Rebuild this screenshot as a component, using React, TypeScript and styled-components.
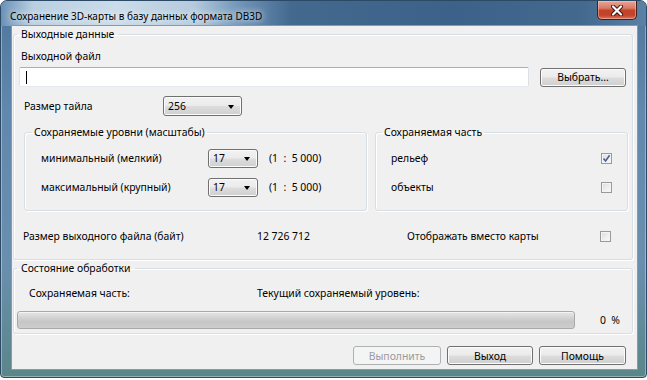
import React from "react";
import styled, { createGlobalStyle } from "styled-components";

const GlobalStyle = createGlobalStyle`
  html, body { margin: 0; padding: 0; background: #ffffff; }
  body { font-family: "Noto Sans", "Open Sans", sans-serif; font-size: 10.4px; color: #000; }
  * { box-sizing: border-box; }
`;

const Window = styled.div`
  width: 647px;
  height: 378px;
  display: flex;
  flex-direction: column;
  padding: 0 9px 8px 11px;
  border: 1px solid #2c4a66;
  border-radius: 7px 7px 4px 4px;
  background: linear-gradient(180deg, #4f769c 0%, #6188ad 30%, #6a8fae 70%, #5a8689 100%);
  box-shadow: inset 0 0 0 1px rgba(255, 255, 255, 0.35);
`;

const TitleBar = styled.div`
  height: 25px;
  display: flex;
  align-items: flex-start;
  margin: 0 -9px 0 -11px;
  padding: 0 9px 0 9px;
  border-radius: 6px 6px 0 0;
  background: linear-gradient(90deg, #6a91b6 0%, #b9cfe2 5%, #cbdcea 18%, #b4cadd 30%, #6f95b8 37%, #44698f 45%, #3c6289 70%, #43698f 90%, #5a81a6 100%);
`;

const TitleText = styled.div`
  margin-top: 8px;
  font-size: 10px;
  line-height: 14px;
  color: #000;
  text-shadow: 0 0 6px rgba(255, 255, 255, 0.9), 0 0 10px rgba(255, 255, 255, 0.7);
`;

const CloseButton = styled.div`
  margin-left: auto;
  width: 40px;
  height: 19px;
  display: flex;
  align-items: center;
  justify-content: center;
  border: 1px solid #4a1e18;
  border-top: none;
  border-radius: 0 0 5px 5px;
  background: linear-gradient(180deg, #e8a595 0%, #d77b66 40%, #c24328 52%, #c0432b 78%, #dc7359 100%);
  box-shadow: inset 0 0 0 1px rgba(255, 210, 200, 0.45);
`;

const Client = styled.div`
  flex: 1;
  display: flex;
  flex-direction: column;
  padding: 1px 4px 0 1px;
  background: #f0f0f0;
  box-shadow: 0 0 0 1px #7f9bb7;
`;

const GroupBox = styled.fieldset<{ $pad: string }>`
  margin: 0;
  min-width: 0;
  padding: ${(p) => p.$pad};
  border: 1px solid #d5dfe5;
  border-radius: 3px;
  box-shadow: inset 1px 1px 0 #ffffff, 1px 1px 0 #ffffff;
`;

const Legend = styled.legend<{ $px: number }>`
  padding: 0 ${(p) => p.$px}px;
  line-height: 14px;
  font-size: 10.4px;
`;

const Label = styled.div<{ $pl?: number; $w?: number }>`
  line-height: 14px;
  padding-left: ${(p) => p.$pl ?? 0}px;
  width: ${(p) => (p.$w ? `${p.$w}px` : "auto")};
  flex-shrink: 0;
  white-space: pre;
`;

const Row = styled.div<{ $mt: number; $pl?: number; $h?: number }>`
  display: flex;
  align-items: center;
  margin-top: ${(p) => p.$mt}px;
  padding-left: ${(p) => p.$pl ?? 0}px;
  height: ${(p) => (p.$h ? `${p.$h}px` : "auto")};
`;

const TextField = styled.div`
  width: 510px;
  height: 20px;
  margin-left: 2px;
  display: flex;
  align-items: center;
  padding-left: 6px;
  background: #ffffff;
  border: 1px solid;
  border-color: #abadb3 #dbdfe6 #e3e9ef #e2e3ea;
  border-radius: 2px;
`;

const Caret = styled.span`
  width: 1px;
  height: 13px;
  background: #000;
`;

const Button = styled.div<{ $w: number; $disabled?: boolean; $ml?: number }>`
  width: ${(p) => p.$w}px;
  height: 19px;
  margin-left: ${(p) => p.$ml ?? 0}px;
  display: flex;
  align-items: center;
  justify-content: center;
  flex-shrink: 0;
  border: 1px solid ${(p) => (p.$disabled ? "#adb2b5" : "#707070")};
  border-radius: 3px;
  color: ${(p) => (p.$disabled ? "#9a9a9a" : "#000")};
  background: ${(p) =>
    p.$disabled
      ? "#f4f4f4"
      : "linear-gradient(180deg, #f2f2f2 0%, #ebebeb 48%, #dddddd 52%, #cfcfcf 100%)"};
  box-shadow: inset 0 0 0 1px ${(p) => (p.$disabled ? "#f4f4f4" : "#fcfcfc")};
  line-height: 14px;
`;

const Combo = styled.div<{ $w: number; $h: number }>`
  width: ${(p) => p.$w}px;
  height: ${(p) => p.$h}px;
  flex-shrink: 0;
  display: flex;
  align-items: center;
  padding: 0 7px 0 4px;
  border: 1px solid #707070;
  border-radius: 3px;
  background: linear-gradient(180deg, #f2f2f2 0%, #ebebeb 48%, #dddddd 52%, #cfcfcf 100%);
  box-shadow: inset 0 0 0 1px #fcfcfc;
  line-height: 14px;
`;

const ComboValue = styled.span`
  flex: 1;
`;

const Arrow = styled.span`
  width: 0;
  height: 0;
  border-left: 3.5px solid transparent;
  border-right: 3.5px solid transparent;
  border-top: 4px solid #000;
  margin-top: 1px;
`;

const GroupsRow = styled.div`
  display: flex;
  gap: 8px;
  margin-top: 9px;
  padding-left: 7px;
`;

const LevelRow = styled.div<{ $mt: number }>`
  display: grid;
  grid-template-columns: 167px 50px auto;
  align-items: center;
  height: 20px;
  margin-top: ${(p) => p.$mt}px;
  padding-left: 9px;
`;

const PartRow = styled.div<{ $mt: number }>`
  display: flex;
  align-items: center;
  height: 20px;
  margin-top: ${(p) => p.$mt}px;
  padding-left: 9px;
  padding-right: 15px;
`;

const Spacer = styled.div`
  flex: 1;
`;

const CheckBox = styled.div<{ $mr?: number }>`
  width: 11px;
  height: 11px;
  flex-shrink: 0;
  margin-right: ${(p) => p.$mr ?? 0}px;
  display: flex;
  align-items: center;
  justify-content: center;
  border: 1px solid #9a9a9a;
  background: linear-gradient(135deg, #dcdcdc 0%, #f0f0f0 60%, #fafafa 100%);
  box-shadow: inset 0 0 0 1px #f4f4f4;
`;

const ProgressRow = styled.div`
  display: flex;
  align-items: center;
  margin-top: 11px;
  padding-right: 12px;
`;

const ProgressBar = styled.div`
  width: 558px;
  height: 18px;
  border: 1px solid #a9a9a9;
  border-radius: 3px;
  background: linear-gradient(180deg, #e6e6e6 0%, #d4d4d4 35%, #c6c6c6 60%, #cdcdcd 100%);
  box-shadow: inset 0 1px 0 #f4f4f4;
`;

const Percent = styled.div`
  margin-left: auto;
  line-height: 14px;
  white-space: pre;
`;

const ButtonRow = styled.div`
  display: flex;
  justify-content: flex-end;
  gap: 6px;
  margin-top: 12px;
  padding-right: 7px;
`;

const CloseGlyph = () => (
  <svg width="14" height="11" viewBox="0 0 14 11">
    <path d="M3 1.5 L11 9.5 M11 1.5 L3 9.5" stroke="#3a1410" strokeWidth="4" strokeLinecap="round" />
    <path d="M3 1.5 L11 9.5 M11 1.5 L3 9.5" stroke="#ffffff" strokeWidth="2.2" strokeLinecap="round" />
  </svg>
);

const CheckMark = () => (
  <svg width="9" height="9" viewBox="0 0 9 9">
    <path d="M1.5 4.5 L3.6 7 L7.6 1.2" stroke="#4a5f97" strokeWidth="1.6" fill="none" />
  </svg>
);

export default function App() {
  return (
    <>
      <GlobalStyle />
      <Window>
        <TitleBar>
          <TitleText>Сохранение 3D-карты в базу данных формата DB3D</TitleText>
          <CloseButton>
            <CloseGlyph />
          </CloseButton>
        </TitleBar>
        <Client>
          <GroupBox $pad="8px 0 16px 3px">
            <Legend $px={4}>Выходные данные</Legend>
            <Label $pl={4}>Выходной файл</Label>
            <Row $mt={4}>
              <TextField>
                <Caret />
              </TextField>
              <Button $w={86} $ml={11}>Выбрать...</Button>
            </Row>
            <Row $mt={9}>
              <Label $pl={7} $w={146}>Размер тайла</Label>
              <Combo $w={79} $h={20}>
                <ComboValue>256</ComboValue>
                <Arrow />
              </Combo>
            </Row>
            <GroupsRow>
              <GroupBox $pad="9px 0 13px 7px" style={{ width: 343 }}>
                <Legend $px={2}>Сохраняемые уровни (масштабы)</Legend>
                <LevelRow $mt={0}>
                  <Label>минимальный (мелкий)</Label>
                  <Combo $w={50} $h={19}>
                    <ComboValue>17</ComboValue>
                    <Arrow />
                  </Combo>
                  <Label $pl={11}>{"(1  :  5 000)"}</Label>
                </LevelRow>
                <LevelRow $mt={9}>
                  <Label>максимальный (крупный)</Label>
                  <Combo $w={50} $h={19}>
                    <ComboValue>17</ComboValue>
                    <Arrow />
                  </Combo>
                  <Label $pl={11}>{"(1  :  5 000)"}</Label>
                </LevelRow>
              </GroupBox>
              <GroupBox $pad="9px 0 13px 6px" style={{ width: 253 }}>
                <Legend $px={2}>Сохраняемая часть</Legend>
                <PartRow $mt={0}>
                  <Label>рельеф</Label>
                  <Spacer />
                  <CheckBox>
                    <CheckMark />
                  </CheckBox>
                </PartRow>
                <PartRow $mt={9}>
                  <Label>объекты</Label>
                  <Spacer />
                  <CheckBox />
                </PartRow>
              </GroupBox>
            </GroupsRow>
            <Row $mt={18} $pl={6} $h={14}>
              <Label $w={234}>Размер выходного файла (байт)</Label>
              <Label $w={150}>12 726 712</Label>
              <Label>Отображать вместо карты</Label>
              <Spacer />
              <CheckBox $mr={21} />
            </Row>
          </GroupBox>
          <GroupBox $pad="11px 0 4px 3px" style={{ marginTop: 1 }}>
            <Legend $px={4}>Состояние обработки</Legend>
            <Row $mt={0} $pl={12} $h={14}>
              <Label $w={228}>Сохраняемая часть:</Label>
              <Label>Текущий сохраняемый уровень:</Label>
            </Row>
            <ProgressRow>
              <ProgressBar />
              <Percent>{"0  %"}</Percent>
            </ProgressRow>
          </GroupBox>
          <ButtonRow>
            <Button $w={88} $disabled>Выполнить</Button>
            <Button $w={86}>Выход</Button>
            <Button $w={87}>Помощь</Button>
          </ButtonRow>
        </Client>
      </Window>
    </>
  );
}
